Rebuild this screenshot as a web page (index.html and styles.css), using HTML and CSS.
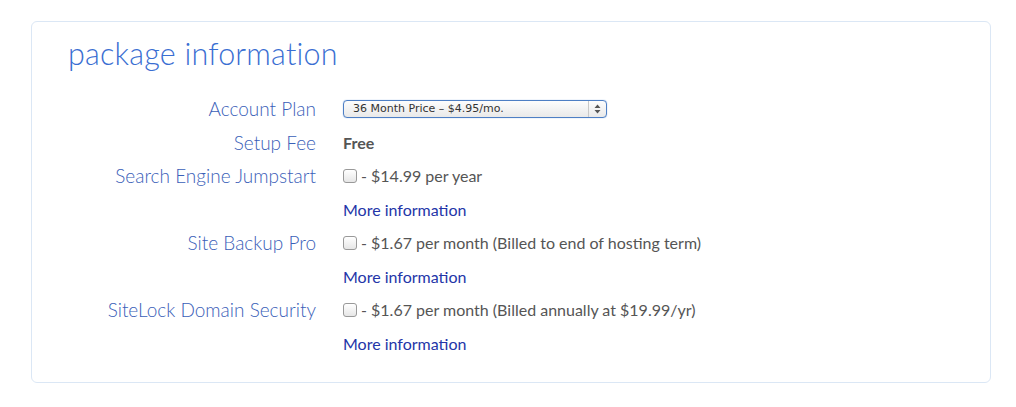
FILE: index.html
```html
<!DOCTYPE html>
<html>
<head>
<meta charset="utf-8">
<link rel="stylesheet" href="styles.css">
</head>
<body>
<div class="panel">
  <h2 class="title">package information</h2>
  <div class="form">
    <div class="label">Account Plan</div>
    <div class="value">
      <div class="select"><span>36 Month Price – $4.95/mo.</span><span class="arrows"><svg width="7" height="10" viewBox="0 0 7 10"><path d="M3.5 0.5 L6.5 4 H0.5 Z M3.5 9.5 L6.5 6 H0.5 Z" fill="#555"/></svg></span></div>
    </div>
    <div class="label">Setup Fee</div>
    <div class="value"><b class="free">Free</b></div>
    <div class="label">Search Engine Jumpstart</div>
    <div class="value"><span class="cb"></span> - $14.99 per year</div>
    <div class="label"></div>
    <div class="value"><a class="more">More information</a></div>
    <div class="label">Site Backup Pro</div>
    <div class="value"><span class="cb"></span> - $1.67 per month (Billed to end of hosting term)</div>
    <div class="label"></div>
    <div class="value"><a class="more">More information</a></div>
    <div class="label">SiteLock Domain Security</div>
    <div class="value"><span class="cb"></span> - $1.67 per month (Billed annually at $19.99/yr)</div>
    <div class="label"></div>
    <div class="value"><a class="more">More information</a></div>
  </div>
</div>
</body>
</html>
```
FILE: styles.css
```css
html, body { margin: 0; padding: 0; background: #fff; }
body { padding: 21px 25px 0 31px; font-family: Lato, "Open Sans", sans-serif; }
.panel {
  width: 960px;
  height: 362px;
  border: 1px solid #dbe7f5;
  border-radius: 6px;
  box-sizing: border-box;
  padding: 12px 0 0 36px;
}
.title {
  margin: 0 0 35px 0;
  font-family: Lato, sans-serif;
  font-weight: 300;
  font-size: 30.5px;
  line-height: 38px;
  color: #3a6ed2;
  letter-spacing: 0.2px;
}
.form {
  display: grid;
  grid-template-columns: 248px auto;
  column-gap: 27px;
  grid-auto-rows: 33.5px;
}
.label {
  text-align: right;
  font-weight: 300;
  font-size: 19px;
  line-height: 24px;
  color: #3a60b8;
  margin-top: -10px;
}
.value {
  font-size: 16px;
  line-height: 20px;
  color: #555;
  display: flex;
  align-items: center;
  margin-top: -8px;
  height: 20px;
}
.free { font-weight: 700; color: #555; }
.cb {
  display: inline-block;
  width: 12px; height: 12px;
  border: 1px solid #999;
  border-radius: 3px;
  background: linear-gradient(#fff, #e6e6e6);
  margin-right: 4px;
  box-sizing: content-box;
}
.more { color: #2435a8; font-size: 16px; }
.select {
  width: 264px; height: 18px;
  box-sizing: border-box;
  border: 1px solid #4e7fc4;
  border-radius: 4px;
  background: linear-gradient(#fdfdfd, #e9e9e9);
  display: flex; align-items: center; justify-content: space-between;
  font-family: "DejaVu Sans", sans-serif;
  font-size: 11px;
  color: #333;
  padding-left: 9px;
  box-shadow: 0 0 1px #6a9ae0;
}
.arrows {
  width: 17px; height: 16px;
  border-left: 1px solid #c8c8c8;
  display: flex; align-items: center; justify-content: center;
}
```
